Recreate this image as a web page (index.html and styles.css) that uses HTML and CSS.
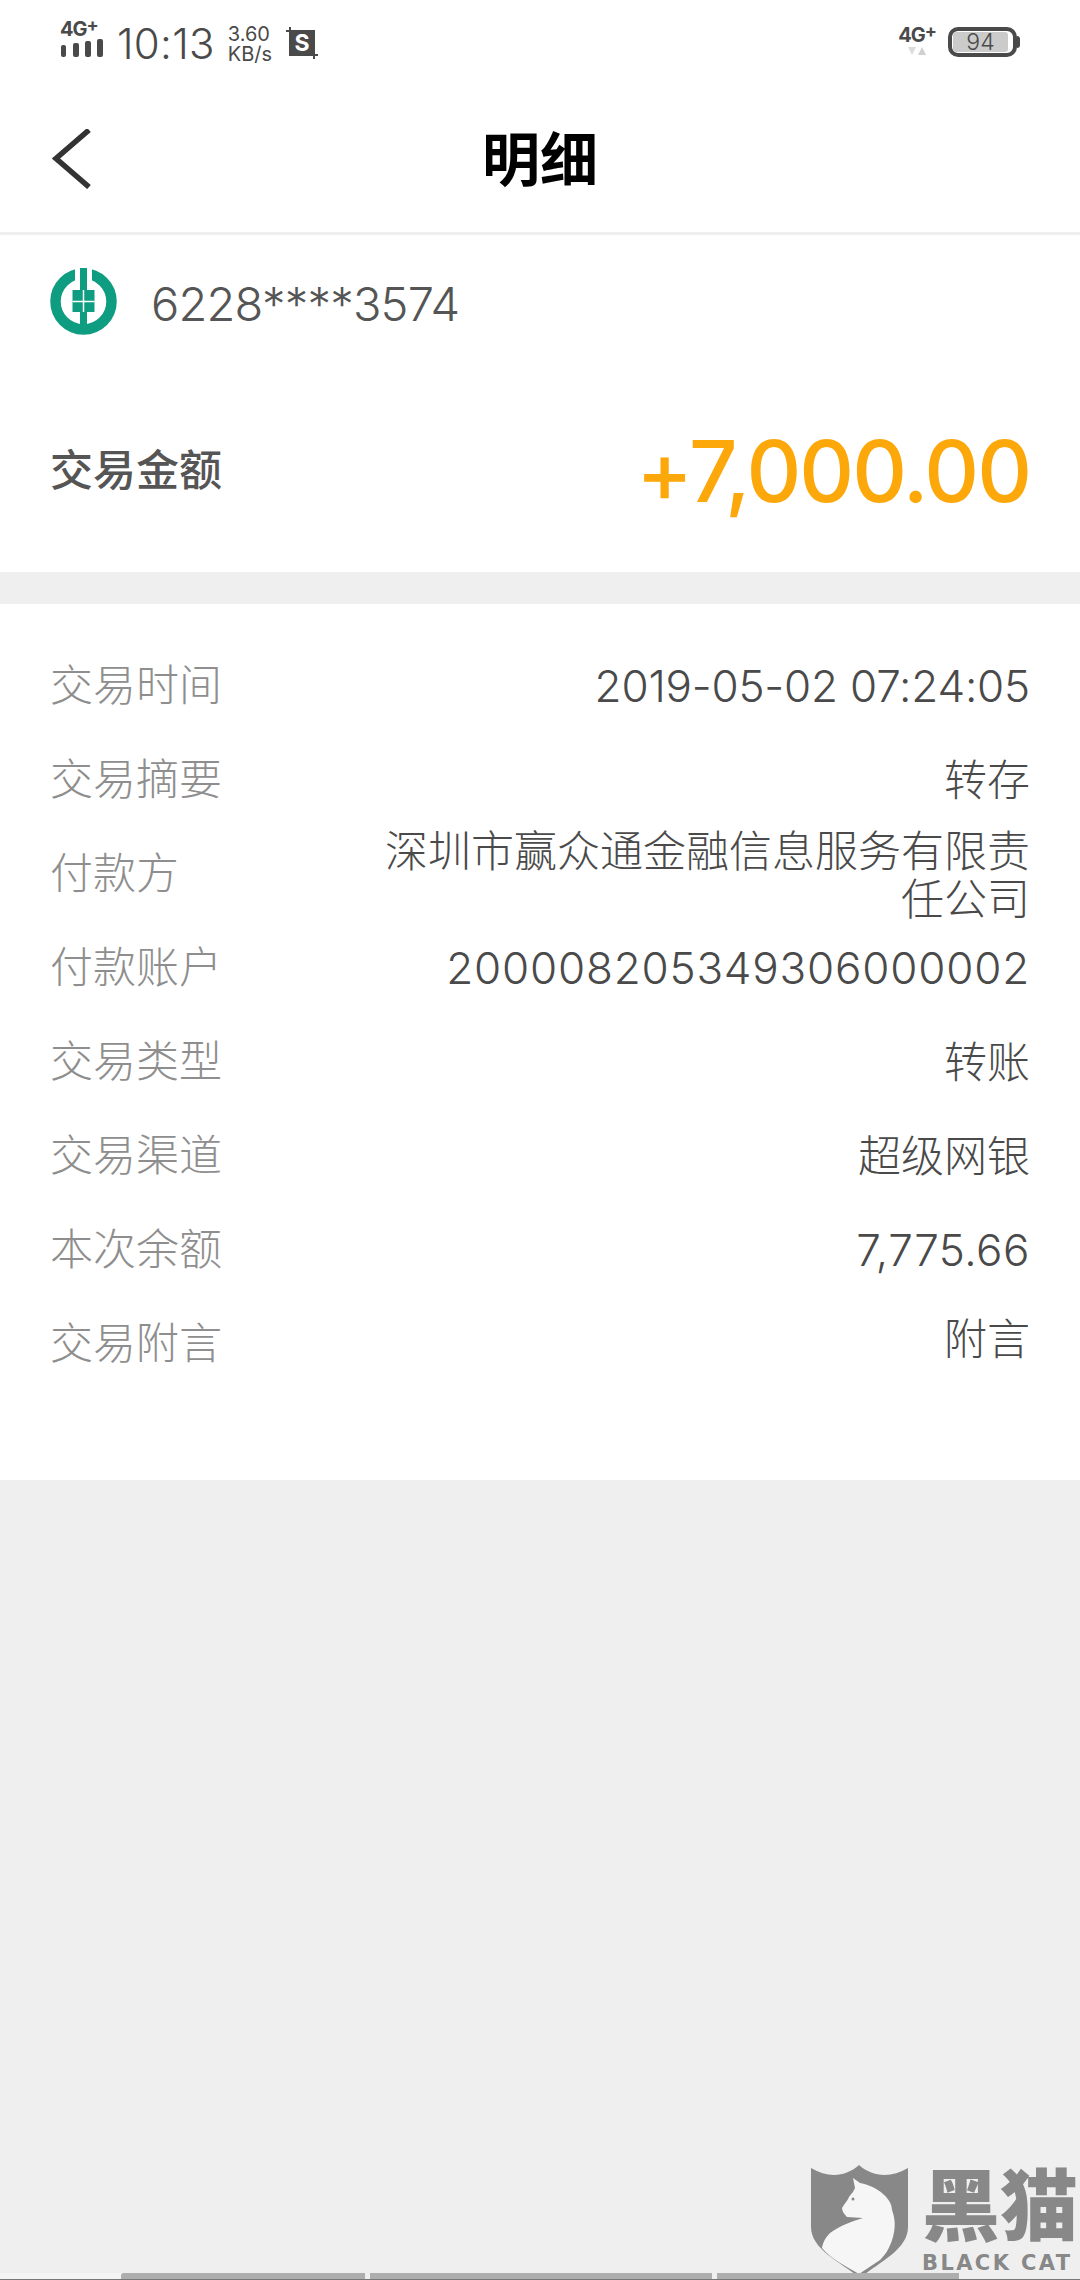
FILE: index.html
```html
<!DOCTYPE html>
<html lang="zh">
<head>
<meta charset="utf-8">
<title>明细</title>
<link rel="stylesheet" href="styles.css">
</head>
<body>
<div class="page">
  <div class="status">
    <div class="status-left">
      <div class="signal">
        <span class="net">4G<sup>+</sup></span>
        <svg class="bars" width="44" height="20" viewBox="0 0 44 20"><rect x="1" y="7" width="5" height="12" rx="2"/><rect x="13" y="5" width="6" height="14" rx="2"/><rect x="25" y="3" width="6" height="16" rx="2"/><rect x="37" y="1" width="6" height="18" rx="2"/></svg>
      </div>
      <span class="clock">10:13</span>
      <div class="speed"><span>3.60</span><span>KB/s</span></div>
      <svg class="shot" width="32" height="32" viewBox="0 0 32 32">
        <rect x="4" y="4" width="24" height="24" fill="#4a4a4a"/>
        <path d="M0 4H28V32M4 0V28H32" fill="none" stroke="#4a4a4a" stroke-width="2"/>
        <text x="16" y="24" text-anchor="middle" class="shot-s">S</text>
      </svg>
    </div>
    <div class="status-right">
      <div class="net-right">
        <span class="net">4G<sup>+</sup></span>
        <svg width="18" height="9" viewBox="0 0 18 9"><path d="M0 0H8L4 8Z" fill="#dcdcdc"/><path d="M10 8H18L14 0Z" fill="#d0d0d0"/></svg>
      </div>
      <div class="battery"><div class="battery-level">94</div></div>
      <div class="battery-cap"></div>
    </div>
  </div>

  <header class="nav">
    <svg class="back" width="42" height="60" viewBox="0 0 42 60"><path d="M38 1L5 29.500L38 58" fill="none" stroke="#333" stroke-width="5.500"/></svg>
    <h1 class="title">明细</h1>
  </header>

  <section class="summary">
    <div class="account">
      <svg class="bank" width="68" height="68" viewBox="0 0 68 68">
        <circle cx="33.500" cy="33.500" r="28" fill="none" stroke="#0f9d82" stroke-width="10.500"/>
        <rect x="25" y="0" width="17" height="23" fill="#fff"/>
        <rect x="30" y="0" width="7" height="23" fill="#0f9d82"/>
        <rect x="22.500" y="22" width="22" height="22" fill="#0f9d82"/>
        <rect x="30" y="44" width="7" height="20" fill="#0f9d82"/>
        <path d="M33.500 22V44M22.500 33.500H44.500" fill="none" stroke="#fff" stroke-width="1.500"/>
      </svg>
      <span class="card-no">6228****3574</span>
    </div>
    <div class="amount-row">
      <span class="amount-label">交易金额</span>
      <span class="amount">+7,000.00</span>
    </div>
  </section>

  <section class="details">
    <div class="row"><span class="key">交易时间</span><span class="val time">2019-05-02 07:24:05</span></div>
    <div class="row"><span class="key">交易摘要</span><span class="val cjk">转存</span></div>
    <div class="row"><span class="key">付款方</span><span class="val cjk long">深圳市赢众通金融信息服务有限责任公司</span></div>
    <div class="row"><span class="key">付款账户</span><span class="val acct">200008205349306000002</span></div>
    <div class="row"><span class="key">交易类型</span><span class="val cjk">转账</span></div>
    <div class="row"><span class="key">交易渠道</span><span class="val cjk">超级网银</span></div>
    <div class="row"><span class="key">本次余额</span><span class="val money">7,775.66</span></div>
    <div class="row"><span class="key">交易附言</span><span class="val cjk note">附言</span></div>
  </section>

  <div class="rest"></div>

  <div class="watermark">
    <svg width="97" height="113" viewBox="0 0 97 113">
      <path d="M0 3C18 14 36 11 48 0C60 11 79 14 97 3V62C97 84 70 96 49 113C28 96 0 84 0 62Z" fill="#888"/>
      <path d="M42 13L49 18C68 22 81 34 81 45C85 56 84 64 82 72C78 86 72 92 69 95C62 100 55 104 48 109C36 102 20 94 11 83C12 76 16 71 19 68C30 60 42 56 52 53L36 52C33 49 31 46 31 43C34 38 37 35 38 32C41 28 43 26 44 23Z" fill="#f6f6f6"/>
      <circle cx="42" cy="34" r="1.500" fill="#888"/>
    </svg>
    <div class="brand"><span class="brand-cn">黑猫</span><span class="brand-en">BLACK CAT</span></div>
  </div>

  <div class="navbar">
    <span class="seg seg-a"></span><span class="seg seg-b"></span><span class="seg seg-c"></span><span class="seg seg-d"></span>
  </div>
</div>
</body>
</html>
```
FILE: styles.css
```css
* { box-sizing: border-box; }
html, body { margin: 0; padding: 0; }
body { width: 1080px; height: 2280px; overflow: hidden; background: #efefef; font-family: "Noto Sans CJK SC", "Noto Sans", sans-serif; }
.page { position: relative; width: 1080px; height: 2280px; display: flex; flex-direction: column; }

.status { height: 82px; background: #fff; display: flex; justify-content: space-between; align-items: flex-start; padding: 20px 60px 0 60px; color: #4a4a4a; }
.status-left { display: flex; align-items: flex-start; }
.signal { display: flex; flex-direction: column; width: 44px; }
.net { font: 700 20px/18px "Inter", sans-serif; color: #4a4a4a; letter-spacing: -1px; white-space: nowrap; }
.net sup { font-size: 18px; line-height: 0; vertical-align: 5px; }
.bars { fill: #4a4a4a; margin-top: 0; }
.clock { font: 300 42px/48px "Inter", sans-serif; margin-left: 13px; letter-spacing: 0.3px; }
.speed { display: flex; flex-direction: column; font: 400 20px/20px "Inter", sans-serif; margin: 4px 0 0 13px; }
.shot { margin: 7px 0 0 14px; }
.shot-s { font: 700 23px "Inter", sans-serif; fill: #fff; }
.status-right { display: flex; align-items: flex-start; }
.net-right { display: flex; flex-direction: column; align-items: center; margin: 6px 13px 0 0; width: 36px; }
.net-right svg { margin-top: 3px; }
.battery { width: 69px; height: 30px; border: 4px solid #4a4a4a; border-radius: 10px; padding: 1px; margin-top: 7px; }
.battery-level { height: 20px; width: 55px; background: #cbcbcb; border-radius: 3px; font: 300 23px/20px "Inter", sans-serif; text-align: center; color: #4a4a4a; }
.battery-cap { width: 3px; height: 12px; background: #4a4a4a; border-radius: 0 3px 3px 0; margin-top: 16px; }

.nav { height: 153px; background: #fff; position: relative; display: flex; align-items: center; justify-content: center; border-bottom: 3px solid #efefef; padding-bottom: 2px; }
.back { position: absolute; left: 51px; top: 47px; }
.title { margin: 0; font-size: 58px; line-height: 1; font-weight: 700; color: #000; }

.summary { height: 337px; background: #fff; padding: 33px 50px 0; }
.account { display: flex; align-items: center; height: 68px; }
.card-no { margin-left: 33px; font: 300 47px/68px "Inter", sans-serif; color: #555; letter-spacing: -0.8px; padding-top: 4px; }
.amount-row { display: flex; justify-content: space-between; align-items: center; margin-top: 84px; height: 100px; }
.amount-label { font-size: 43px; font-weight: 500; color: #555; margin-top: -6px; }
.amount { font: 500 85px/100px "Inter", sans-serif; color: #fca80a; letter-spacing: -2px; padding-top: 4px; }

.details { margin-top: 32px; height: 876px; background: #fff; padding: 31px 50px 0; }
.row { display: flex; justify-content: space-between; align-items: center; height: 94px; }
.key { font-size: 43px; font-weight: 300; color: #8e8e8e; white-space: nowrap; }
.val { font: 300 44px/48px "Inter", "Noto Sans CJK SC", sans-serif; color: #4a4a4a; text-align: right; margin-top: 8px; }
.time { letter-spacing: -0.2px; }
.acct { letter-spacing: 0.8px; }
.money { letter-spacing: 0.5px; }
.cjk { font-size: 43px; font-family: "Noto Sans CJK SC", sans-serif; margin-top: 2px; }
.long { width: 650px; margin-top: 3px; }
.note { margin-top: -9px; }

.rest { flex: 1; }

.watermark { position: absolute; left: 811px; top: 2165px; display: flex; gap: 14px; }
.brand { display: flex; flex-direction: column; margin-top: 3px; color: #888; }
.brand-cn { font: 900 78px/80px "Liberation Sans", "Noto Sans CJK SC", sans-serif; white-space: nowrap; }
.brand-en { font: 700 21px/24px "DejaVu Sans", sans-serif; white-space: nowrap; margin-top: 3px; letter-spacing: 2.4px; }

.navbar { display: flex; height: 7px; position: absolute; left: 0; right: 0; bottom: 0; border-bottom: 1px solid #777; }
.seg { display: block; height: 6px; }
.seg-a { width: 121px; background: #f4f4f4; }
.seg-b { width: 244px; background: #aeaeae; border-radius: 3px 0 0 0; }
.seg-c { width: 342px; margin-left: 5px; background: #aeaeae; }
.seg-d { width: 242px; margin-left: 5px; background: #aeaeae; }
```
